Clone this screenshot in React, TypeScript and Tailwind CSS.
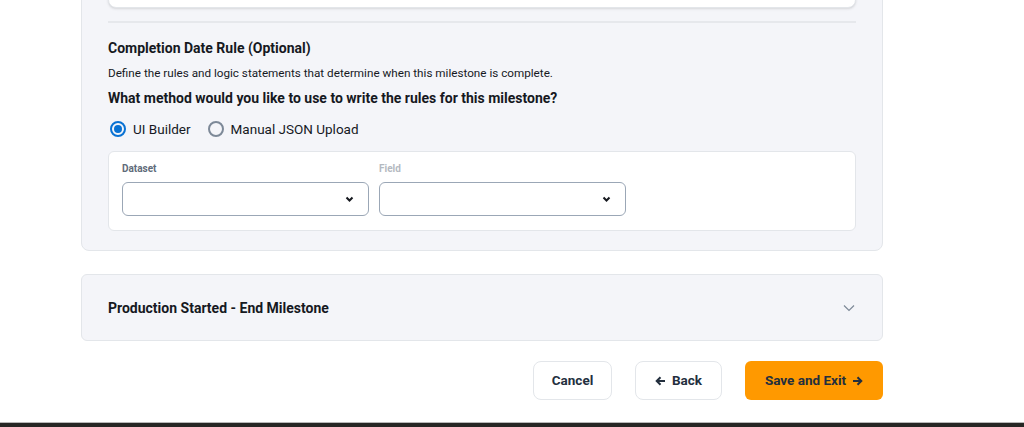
import React, { useState } from "react";

function Radio({ checked, label, onClick }: { checked: boolean; label: string; onClick: () => void }) {
  return (
    <label className="flex items-center gap-[7px] cursor-pointer" onClick={onClick}>
      <span
        className={
          "flex h-[16px] w-[16px] items-center justify-center rounded-full border-2 " +
          (checked ? "border-[#0972d3]" : "border-[#7d8998]")
        }
      >
        {checked && <span className="h-[8px] w-[8px] rounded-full bg-[#0972d3]" />}
      </span>
      <span className="text-[13.5px] leading-[20px] text-[#16191f]">{label}</span>
    </label>
  );
}

function Select({ label, disabled }: { label: string; disabled?: boolean }) {
  return (
    <div className="flex w-[247px] flex-col">
      <span
        className={
          "text-[10px] leading-[14px] font-bold " + (disabled ? "text-[#b4b9c1]" : "text-[#5f6b7a]")
        }
      >
        {label}
      </span>
      <div className="mt-[6px] flex h-[34px] items-center justify-end rounded-md border border-[#9ba7b6] bg-white pr-[14px]">
        <svg width="9" height="6" viewBox="0 0 9 6">
          <path d="M1.5 1.5 L4.5 4.5 L7.5 1.5" fill="none" stroke="#16191f" strokeWidth="2" />
        </svg>
      </div>
    </div>
  );
}

function Arrow({ left }: { left?: boolean }) {
  return (
    <svg width="11" height="10" viewBox="0 0 11 10" className={left ? "" : "rotate-180"}>
      <path d="M10 5 H2 M5.5 1.2 L1.7 5 L5.5 8.8" fill="none" stroke="#232f3e" strokeWidth="2" />
    </svg>
  );
}

export default function App() {
  const [method, setMethod] = useState("ui");

  return (
    <div className="flex min-h-screen flex-col bg-white font-['Roboto',sans-serif] text-[#16191f]">
      <div className="ml-[81px] w-[802px] -mt-[53px]">
        <div className="rounded-b-lg border border-[#e3e6ea] bg-[#f4f5f9] px-[26px] pb-[19px]">
          <div className="h-[60px] rounded-lg border border-[#e3e6ea] bg-white shadow-sm" />
          <div className="mt-[13px] h-[2px] bg-[#e6e8ec]" />

          <h3 className="mt-[15px] text-[14px] leading-[20px] font-bold">Completion Date Rule (Optional)</h3>
          <p className="mt-[7px] text-[11.7px] leading-[16px] text-[#16191f]">
            Define the rules and logic statements that determine when this milestone is complete.
          </p>
          <p className="mt-[7px] text-[14px] leading-[20px] font-bold">
            What method would you like to use to write the rules for this milestone?
          </p>

          <div className="mt-[11px] flex items-center gap-[17px] pl-[2px]">
            <Radio checked={method === "ui"} label="UI Builder" onClick={() => setMethod("ui")} />
            <Radio checked={method === "json"} label="Manual JSON Upload" onClick={() => setMethod("json")} />
          </div>

          <div className="mt-[12px] flex gap-[10px] rounded-md border border-[#e3e6ea] bg-white px-[13px] pt-[10px] pb-[14px]">
            <Select label="Dataset" />
            <Select label="Field" disabled />
          </div>
        </div>

        <div className="mt-[23px] flex h-[67px] items-center justify-between rounded-md border border-[#e3e6ea] bg-[#f4f5f9] pl-[26px] pr-[27px]">
          <span className="text-[14px] leading-[20px] font-bold">Production Started - End Milestone</span>
          <svg width="12" height="8" viewBox="0 0 12 8">
            <path d="M1 1.5 L6 6.5 L11 1.5" fill="none" stroke="#7d8998" strokeWidth="1.2" />
          </svg>
        </div>

        <div className="mt-[20px] flex justify-end gap-[23px]">
          <button className="h-[39px] w-[79px] rounded-lg border border-[#e3e6ea] bg-white text-[13.5px] font-bold text-[#232f3e]">
            Cancel
          </button>
          <button className="flex h-[39px] w-[87px] items-center justify-center gap-[6px] rounded-lg border border-[#e3e6ea] bg-white text-[13.5px] font-bold text-[#232f3e]">
            <Arrow left />
            Back
          </button>
          <button className="flex h-[39px] w-[138px] items-center justify-center gap-[6px] rounded-md bg-[#ff9900] text-[13.5px] font-bold text-[#232f3e]">
            Save and Exit
            <Arrow />
          </button>
        </div>
      </div>

      <div className="mt-[22px] h-[5px] border-t border-[#b8b8b8] bg-[#262624]" />
    </div>
  );
}
